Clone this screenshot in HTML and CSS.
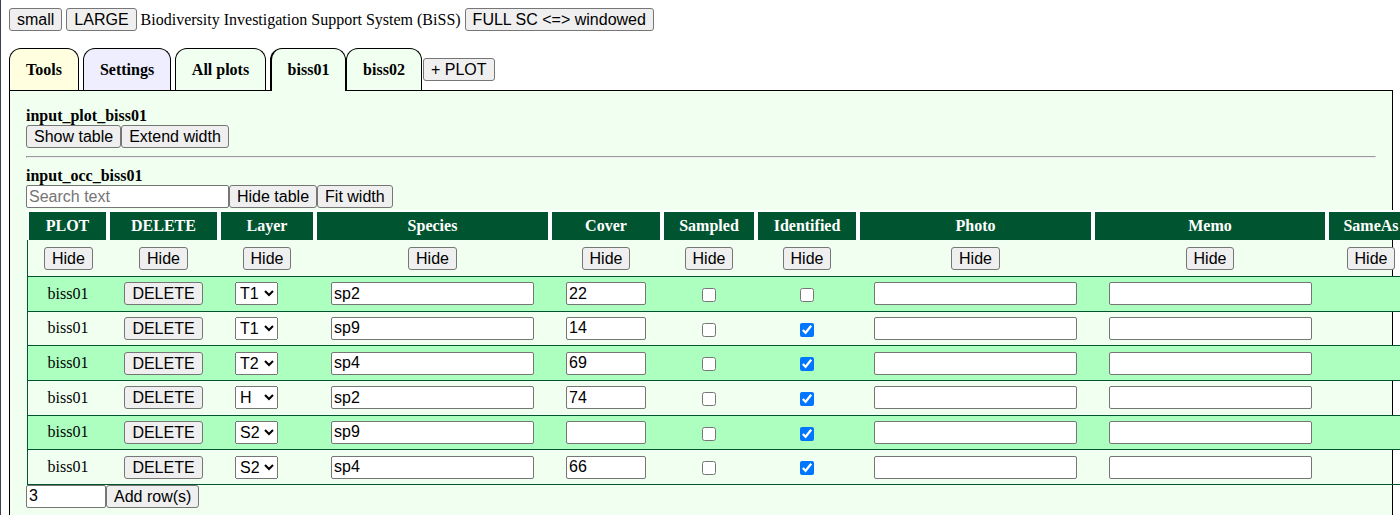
FILE: index.html
```html
<!DOCTYPE html>
<html>
<head>
<meta charset="utf-8">
<title>BiSS</title>
<link rel="stylesheet" href="styles.css">
</head>
<body>
<div class="page">
<div class="topbar">
  <button class="btn">small</button>
  <button class="btn">LARGE</button>
  <span class="title">Biodiversity Investigation Support System (BiSS)</span>
  <button class="btn">FULL SC &lt;=&gt; windowed</button>
</div>
<div class="tabs">
  <div class="tab tab-tools">Tools</div>
  <div class="tab tab-settings">Settings</div>
  <div class="tab tab-all">All plots</div>
  <div class="tab tab-plot tab-active">biss01</div>
  <div class="tab tab-plot tab-last">biss02</div>
  <button class="btn btn-plot">+ PLOT</button>
</div>
<div class="panel">
  <div class="label">input_plot_biss01</div>
  <div class="ctrl-row"><button class="btn">Show table</button><button class="btn">Extend width</button></div>
  <hr class="sep">
  <div class="label">input_occ_biss01</div>
  <div class="ctrl-row"><input class="txt wide" type="text" placeholder="Search text"><button class="btn">Hide table</button><button class="btn">Fit width</button></div>
  <table class="occ">
    <colgroup>
      <col class="c-plot"><col class="c-del"><col class="c-layer"><col class="c-species"><col class="c-cover"><col class="c-sampled"><col class="c-ident"><col class="c-photo"><col class="c-memo"><col class="c-same">
    </colgroup>
    <thead>
      <tr><th>PLOT</th><th>DELETE</th><th>Layer</th><th>Species</th><th>Cover</th><th>Sampled</th><th>Identified</th><th>Photo</th><th>Memo</th><th>SameAs</th></tr>
    </thead>
    <tbody>
      <tr class="hide-row">
        <td><button class="btn">Hide</button></td><td><button class="btn">Hide</button></td><td><button class="btn">Hide</button></td><td><button class="btn">Hide</button></td><td><button class="btn">Hide</button></td><td><button class="btn">Hide</button></td><td><button class="btn">Hide</button></td><td><button class="btn">Hide</button></td><td><button class="btn">Hide</button></td><td><button class="btn">Hide</button></td>
      </tr>
      <tr class="data green">
        <td>biss01</td><td><button class="btn">DELETE</button></td>
        <td class="layer"><select class="sel"><option selected>T1</option><option>T2</option><option>S1</option><option>S2</option><option>H</option></select></td>
        <td><input class="txt wide" type="text" value="sp2"></td><td><input class="txt num" type="text" value="22"></td>
        <td><input type="checkbox" class="chk"></td><td><input type="checkbox" class="chk"></td>
        <td><input class="txt wide" type="text"></td><td><input class="txt wide" type="text"></td><td></td>
      </tr>
      <tr class="data">
        <td>biss01</td><td><button class="btn">DELETE</button></td>
        <td class="layer"><select class="sel"><option selected>T1</option><option>T2</option><option>S1</option><option>S2</option><option>H</option></select></td>
        <td><input class="txt wide" type="text" value="sp9"></td><td><input class="txt num" type="text" value="14"></td>
        <td><input type="checkbox" class="chk"></td><td><input type="checkbox" class="chk" checked></td>
        <td><input class="txt wide" type="text"></td><td><input class="txt wide" type="text"></td><td></td>
      </tr>
      <tr class="data green">
        <td>biss01</td><td><button class="btn">DELETE</button></td>
        <td class="layer"><select class="sel"><option>T1</option><option selected>T2</option><option>S1</option><option>S2</option><option>H</option></select></td>
        <td><input class="txt wide" type="text" value="sp4"></td><td><input class="txt num" type="text" value="69"></td>
        <td><input type="checkbox" class="chk"></td><td><input type="checkbox" class="chk" checked></td>
        <td><input class="txt wide" type="text"></td><td><input class="txt wide" type="text"></td><td></td>
      </tr>
      <tr class="data">
        <td>biss01</td><td><button class="btn">DELETE</button></td>
        <td class="layer"><select class="sel"><option>T1</option><option>T2</option><option>S1</option><option>S2</option><option selected>H</option></select></td>
        <td><input class="txt wide" type="text" value="sp2"></td><td><input class="txt num" type="text" value="74"></td>
        <td><input type="checkbox" class="chk"></td><td><input type="checkbox" class="chk" checked></td>
        <td><input class="txt wide" type="text"></td><td><input class="txt wide" type="text"></td><td></td>
      </tr>
      <tr class="data green">
        <td>biss01</td><td><button class="btn">DELETE</button></td>
        <td class="layer"><select class="sel"><option>T1</option><option>T2</option><option>S1</option><option selected>S2</option><option>H</option></select></td>
        <td><input class="txt wide" type="text" value="sp9"></td><td><input class="txt num" type="text" value=""></td>
        <td><input type="checkbox" class="chk"></td><td><input type="checkbox" class="chk" checked></td>
        <td><input class="txt wide" type="text"></td><td><input class="txt wide" type="text"></td><td></td>
      </tr>
      <tr class="data">
        <td>biss01</td><td><button class="btn">DELETE</button></td>
        <td class="layer"><select class="sel"><option>T1</option><option>T2</option><option>S1</option><option selected>S2</option><option>H</option></select></td>
        <td><input class="txt wide" type="text" value="sp4"></td><td><input class="txt num" type="text" value="66"></td>
        <td><input type="checkbox" class="chk"></td><td><input type="checkbox" class="chk" checked></td>
        <td><input class="txt wide" type="text"></td><td><input class="txt wide" type="text"></td><td></td>
      </tr>
    </tbody>
  </table>
  <div class="ctrl-row"><input class="txt num" type="text" value="3"><button class="btn">Add row(s)</button></div>
</div>
</div>
</body>
</html>
```
FILE: styles.css
```css
html {
  background: #ffffff;
}
body {
  margin: 0;
  padding: 8px 0 0 8px;
  border-left: 1px solid #3a4150;
  font-family: "Liberation Serif", "Times New Roman", serif;
  font-size: 16px;
  color: #000;
}
.page {
  margin-right: 7px;
}
.btn {
  font-family: "Liberation Sans", Arial, sans-serif;
  font-size: 16px;
  height: 23px;
  box-sizing: border-box;
  padding: 0 7px;
  margin: 0;
  border: 1px solid #767676;
  border-radius: 3px;
  background: #efefef;
  color: #000;
  line-height: 21px;
  vertical-align: middle;
}
.topbar {
  display: flex;
  align-items: center;
  gap: 4px;
  height: 23px;
}
.tabs {
  display: flex;
  align-items: flex-end;
  margin-top: 17px;
  height: 42px;
  border-bottom: 1px solid #000;
}
.tab {
  box-sizing: border-box;
  height: 42px;
  border: 1px solid #000;
  border-bottom: 0;
  border-radius: 12px 12px 0 0;
  display: flex;
  align-items: center;
  justify-content: center;
  font-weight: bold;
  margin-right: 4px;
  background: #f0fff0;
}
.tab-tools { width: 70px; background: #ffffe0; }
.tab-settings { width: 88px; background: #eeeeff; }
.tab-all { width: 91px; }
.tab-plot { width: 76px; margin-right: 0; }
.tab-last { margin-right: 1px; }
.tab-active {
  height: 43px;
  margin-bottom: -1px;
  border-left-width: 2px;
}
.btn-plot { margin-bottom: 9px; }
.panel {
  border: 1px solid #000;
  border-top: 0;
  background: #f0fff0;
  padding: 15px 16px 16px 16px;
}
.label {
  font-weight: bold;
  line-height: 19px;
}
.ctrl-row {
  display: flex;
  height: 23px;
}
.sep {
  margin: 8px 0;
}
.txt {
  font-family: "Liberation Sans", Arial, sans-serif;
  font-size: 16px;
  height: 23px;
  box-sizing: border-box;
  border: 1px solid #767676;
  border-radius: 2px;
  padding: 1px 2px;
  margin: 0;
  background: #fff;
  color: #000;
  vertical-align: middle;
}
.txt::placeholder { color: #757575; }
.wide { width: 203px; }
.num { width: 80px; }
.sel {
  font-family: "Liberation Sans", Arial, sans-serif;
  font-size: 16px;
  width: 43px;
  height: 23px;
  margin: 0;
  vertical-align: middle;
}
.chk {
  width: 14px;
  height: 14px;
  margin: 0;
  vertical-align: middle;
}
.occ {
  border-collapse: separate;
  border-spacing: 0;
  table-layout: fixed;
  width: 1388px;
  margin: 2px 0 0 1px;
}
.c-plot { width: 81px; }
.c-del { width: 111px; }
.c-layer { width: 96px; }
.c-species { width: 235px; }
.c-cover { width: 112px; }
.c-sampled { width: 94px; }
.c-ident { width: 102px; }
.c-photo { width: 235px; }
.c-memo { width: 234px; }
.c-same { width: 88px; }
.occ th {
  background: #005530;
  color: #fff;
  font-weight: bold;
  border: 2px solid #fff;
  border-bottom: 0;
  padding: 5px 0;
  line-height: 18px;
  text-align: center;
  white-space: nowrap;
}
.occ td {
  padding: 0 16px;
  text-align: center;
  vertical-align: middle;
  border-bottom: 1px solid #005530;
  white-space: nowrap;
}
.occ td:first-child { border-left: 1px solid #005530; }
.occ td.layer { text-align: left; }
.hide-row { height: 37px; }
.data { height: 34.67px; }
.green { background: #adffc0; }
```
